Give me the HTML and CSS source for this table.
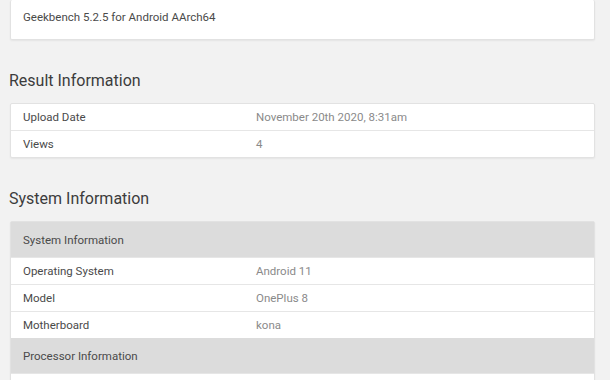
FILE: index.html
```html
<!DOCTYPE html>
<html>
<head>
<meta charset="utf-8">
<link rel="stylesheet" href="styles.css">
</head>
<body>
<div class="page">
  <div class="card top-card">Geekbench 5.2.5 for Android AArch64</div>

  <h2 class="heading">Result Information</h2>
  <div class="card table">
    <div class="row"><div class="name">Upload Date</div><div class="value">November 20th 2020, 8:31am</div></div>
    <div class="row"><div class="name">Views</div><div class="value">4</div></div>
  </div>

  <h2 class="heading">System Information</h2>
  <div class="card table">
    <div class="row head"><div class="name">System Information</div></div>
    <div class="row"><div class="name">Operating System</div><div class="value">Android 11</div></div>
    <div class="row"><div class="name">Model</div><div class="value">OnePlus 8</div></div>
    <div class="row"><div class="name">Motherboard</div><div class="value">kona</div></div>
    <div class="row head"><div class="name">Processor Information</div></div>
    <div class="row"><div class="name"></div><div class="value"></div></div>
  </div>
</div>
</body>
</html>
```

FILE: styles.css
```css
* { box-sizing: border-box; }
html, body { margin: 0; padding: 0; }
body {
  background: #f2f2f2;
  font-family: Roboto, "Liberation Sans", sans-serif;
  color: #4a4a4a;
  font-size: 11.5px;
}
.page {
  padding: 0 15px 0 10px;
}
.card {
  background: #fff;
  border: 1px solid #e2e2e2;
  border-radius: 2px;
  box-shadow: 0 1px 2px rgba(0,0,0,0.06);
}
.top-card {
  border-top: none;
  height: 40px;
  padding: 10px 12px 0;
  line-height: 14px;
  color: #4a4a4a;
}
.heading {
  margin: 31px 0 12px -1px;
  font-weight: 400;
  font-size: 16px;
  line-height: 20px;
  color: #3c3c3c;
}
.table {
  display: flex;
  flex-direction: column;
}
.row {
  display: grid;
  grid-template-columns: 233px 1fr;
  height: 27px;
  align-items: center;
  border-top: 1px solid #e6e6e6;
}
.row:first-child { border-top: none; height: 26px; }
.row.head {
  background: #dcdcdc;
  height: 35px;
  border-top: none;
}
.name { padding-left: 12px; color: #4a4a4a; }
.value { padding-left: 12px; color: #8a8a8a; }
```
